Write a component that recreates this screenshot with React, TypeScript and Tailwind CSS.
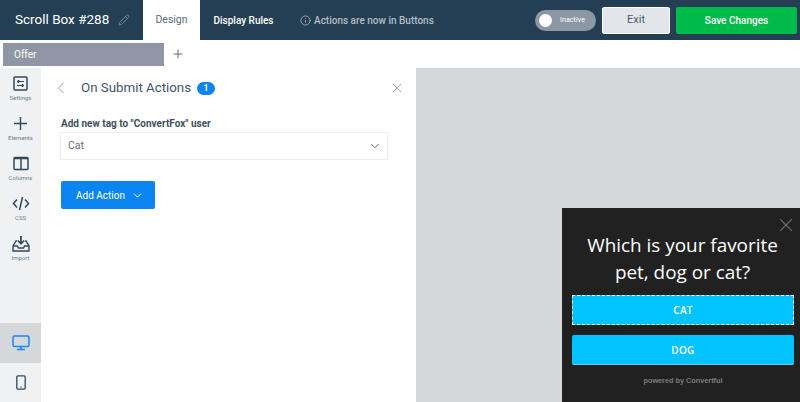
import React from 'react';
import { ChevronDown, ChevronLeft, Info, Pencil, Plus, X } from 'lucide-react';

const SettingsIcon = () => (
  <svg width="15" height="15" viewBox="0 0 15 15" fill="none" stroke="#2f4a5f" strokeWidth="1.5">
    <rect x="1" y="1" width="13" height="13" rx="1" />
    <path d="M4 5.5h7M4 9.5h7" strokeWidth="1.1" />
    <path d="M5.5 4v3M9.5 8v3" strokeWidth="1.6" />
  </svg>
);

const ElementsIcon = () => (
  <svg width="15" height="15" viewBox="0 0 15 15" fill="none" stroke="#2f4a5f" strokeWidth="1.4">
    <path d="M7.5 1v13M1 7.5h13" />
  </svg>
);

const ColumnsIcon = () => (
  <svg width="16" height="15" viewBox="0 0 16 15" fill="none" stroke="#2f4a5f" strokeWidth="1.5">
    <rect x="1" y="1.5" width="14" height="12" rx="1" />
    <path d="M8 1.5v12" />
    <path d="M1 2.5h14" strokeWidth="1.5" />
  </svg>
);

const CssIcon = () => (
  <svg width="18" height="15" viewBox="0 0 18 15" fill="none" stroke="#2f4a5f" strokeWidth="1.5">
    <path d="M5 3.5 1.5 7.5 5 11.5M13 3.5l3.5 4-3.5 4M10.5 1 7.5 14" />
  </svg>
);

const ImportIcon = () => (
  <svg width="18" height="17" viewBox="0 0 18 17" fill="none" stroke="#2f4a5f" strokeWidth="1.4">
    <path d="M9 1v7" strokeWidth="1.8" />
    <path d="M5.8 5.5 9 8.8l3.2-3.3" strokeWidth="1.6" />
    <path d="M5 6H4L1 11v5h16v-5l-3-5h-1" />
    <path d="M1 11h4.5l1 2h5l1-2H17" />
  </svg>
);

const DesktopIcon = () => (
  <svg width="18" height="16" viewBox="0 0 18 16" fill="none" stroke="#1a86f0" strokeWidth="1.5">
    <rect x="1" y="1" width="16" height="10.5" rx="1.5" fill="#d5d8db" />
    <path d="M9 12v2.5M5 14.5h8" strokeWidth="1.6" />
  </svg>
);

const MobileIcon = () => (
  <svg width="10" height="15" viewBox="0 0 10 15" fill="none" stroke="#2f4a5f" strokeWidth="1.3">
    <rect x="0.8" y="0.8" width="8.4" height="13.4" rx="1.2" />
    <path d="M5 11.2v1.6" stroke="#777" />
  </svg>
);

const sideItems = [
  { label: 'Settings', icon: <SettingsIcon /> },
  { label: 'Elements', icon: <ElementsIcon /> },
  { label: 'Columns', icon: <ColumnsIcon /> },
  { label: 'CSS', icon: <CssIcon /> },
  { label: 'Import', icon: <ImportIcon /> },
];

export default function App() {
  return (
    <div className="relative flex h-[402px] w-[800px] flex-col overflow-hidden bg-white font-['Roboto',sans-serif]">
      <header className="flex h-10 shrink-0 items-center bg-[#243f54]">
        <div className="flex w-[143px] items-center pl-[15px]">
          <span className="text-[13.5px] leading-none text-white">Scroll Box #288</span>
          <Pencil size={12} className="ml-[9px] text-[#8d9aa6]" strokeWidth={1.5} />
        </div>
        <div className="flex h-10 w-[57px] items-center justify-center bg-white text-[10.5px] text-[#5a6b78]">Design</div>
        <div className="flex w-[87px] justify-center text-[10px] font-medium text-white">Display Rules</div>
        <div className="ml-[13px] flex items-center gap-[3px] text-[10px] font-medium text-[#b4bec6]">
          <Info size={11} strokeWidth={1.6} />
          <span>Actions are now in Buttons</span>
        </div>
        <div className="ml-auto flex items-center">
          <div className="flex h-[21px] w-[61px] items-center rounded-full bg-[#8b97a2] pl-[4px]">
            <span className="h-[13px] w-[13px] rounded-full bg-white" />
            <span className="ml-[8px] text-[7.2px] text-white">Inactive</span>
          </div>
          <button className="ml-[6px] flex h-[27px] w-[68px] items-center justify-center rounded-[2px] border border-white bg-[#e2e5e9] text-[11px] text-[#4a5b68]">Exit</button>
          <button className="ml-[6px] mr-[3px] flex h-[27px] w-[121px] items-center justify-center rounded-[2px] bg-[#00ba4a] text-[10px] font-medium text-white">Save Changes</button>
        </div>
      </header>

      <div className="flex h-[28px] shrink-0 items-center">
        <div className="ml-[3px] flex h-[23px] w-[161px] items-center bg-[#8f96a5] pl-[11px] text-[10px] text-white">Offer</div>
        <Plus size={14} className="ml-[7px] text-[#3f5566]" strokeWidth={1.4} />
      </div>

      <div className="flex min-h-0 flex-1">
        <aside className="flex w-[41px] shrink-0 flex-col bg-[#f0f1f3]">
          <div className="-mt-[3px] flex flex-col">
            {sideItems.map((item) => (
              <div key={item.label} className="flex h-10 flex-col items-center justify-end pb-[3px]">
                <div className="flex h-[18px] items-center">{item.icon}</div>
                <span className="mt-[1px] text-[6px] leading-[9px] text-[#6f7c87]">{item.label}</span>
              </div>
            ))}
          </div>
          <div className="mt-auto flex h-10 items-center justify-center bg-[#d5d8db]">
            <DesktopIcon />
          </div>
          <div className="flex h-[39px] items-center justify-center">
            <MobileIcon />
          </div>
        </aside>

        <main className="w-[375px] shrink-0 pl-5 pr-[14px]">
          <div className="flex h-10 items-center">
            <ChevronLeft size={20} className="-ml-[10px] text-[#8d9aa6]" strokeWidth={1.2} />
            <span className="ml-[10px] text-[13.3px] leading-none text-[#3f5566]">On Submit Actions</span>
            <span className="ml-[6px] flex h-[13px] w-[18px] items-center justify-center rounded-full bg-[#0a84f0] text-[8.5px] font-bold text-white">1</span>
            <X size={16} className="ml-auto -mr-[3px] text-[#8d9aa6]" strokeWidth={1.3} />
          </div>
          <label className="mt-[9px] block text-[10px] font-bold leading-[14px] text-[#3f4f5c]">Add new tag to "ConvertFox" user</label>
          <div className="-ml-px mt-[1px] flex h-[28px] w-[328px] items-center justify-between border border-[#eeeeee] pl-[7px] pr-[5px]">
            <span className="text-[10.5px] text-[#65717b]">Cat</span>
            <ChevronDown size={14} className="text-[#4a5b68]" strokeWidth={1.5} />
          </div>
          <button className="mt-[21px] flex h-[28px] w-[94px] items-center gap-[6px] rounded-[2px] bg-[#0a84f0] pl-[15px] text-[10px] text-white">
            Add Action
            <ChevronDown size={13} strokeWidth={1.8} />
          </button>
        </main>

        <div className="flex-1 bg-[#d5d8db]" />
      </div>

      <div className="absolute bottom-0 right-0 flex h-[194px] w-[238px] flex-col bg-[#212121] pl-[10px] pr-[6px] font-['Open_Sans',sans-serif]">
        <X size={22} className="absolute right-[3px] top-[6px] text-[#6b6b6b]" strokeWidth={1.2} />
        <div className="-ml-[1px] mt-[24px] text-center text-[18.9px] leading-[27px] text-white">
          Which is your favorite<br />pet, dog or cat?
        </div>
        <button className="mt-[9px] flex h-[30px] w-full items-center justify-center border border-dashed border-white bg-[#00c3ff] pt-[1px] text-[10px] font-semibold tracking-[0.3px] text-white">CAT</button>
        <button className="mt-[10px] flex h-[30px] w-full items-center justify-center rounded-[2px] border-b border-[#7cc5e8] bg-[#00c3ff] pt-[1px] text-[10px] font-semibold tracking-[0.3px] text-white">DOG</button>
        <div className="mt-[11px] text-center font-['Liberation_Sans',sans-serif] text-[7.3px] font-bold text-[#7c7c7c]">powered by Convertful</div>
      </div>
    </div>
  );
}
